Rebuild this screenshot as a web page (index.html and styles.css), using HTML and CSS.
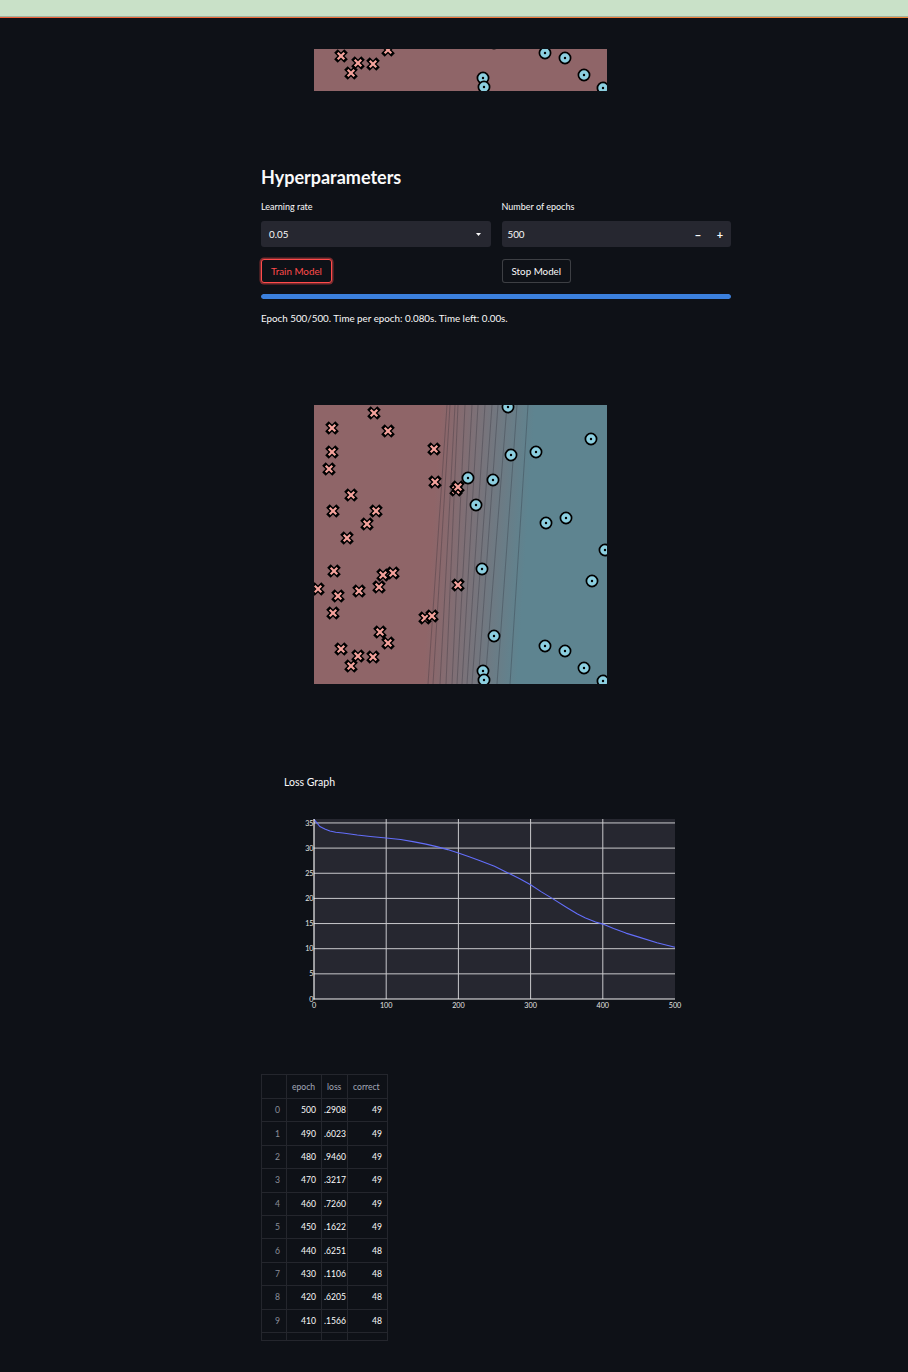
FILE: index.html
```html
<!DOCTYPE html>
<html>
<head>
<meta charset="utf-8">
<link rel="stylesheet" href="styles.css">
</head>
<body>
<div class="topbar"></div>
<div class="deco"></div>
<svg width="0" height="0" class="defs">
  <defs>
    <g id="cx">
      <path class="cx-o" d="M-3.3-3.3L3.3 3.3M3.3-3.3L-3.3 3.3"/>
      <path class="cx-i" d="M-3.3-3.3L3.3 3.3M3.3-3.3L-3.3 3.3"/>
    </g>
    <g id="co">
      <circle class="co-o" r="5.6"/>
      <circle class="co-d" r="1.2"/>
    </g>
    <linearGradient id="bgGrad" gradientUnits="userSpaceOnUse" x1="118" y1="135" x2="212" y2="141">
      <stop offset="0" stop-color="#8f6568"/>
      <stop offset="1" stop-color="#5e8490"/>
    </linearGradient>
    <g id="pts">
      <use href="#cx" x="60" y="8"/><use href="#cx" x="18" y="23"/><use href="#cx" x="74" y="26"/>
      <use href="#cx" x="18" y="47"/><use href="#cx" x="15" y="64"/><use href="#cx" x="120" y="44"/>
      <use href="#cx" x="121" y="77"/><use href="#cx" x="142" y="85"/><use href="#cx" x="144" y="82"/>
      <use href="#cx" x="37" y="90"/><use href="#cx" x="19" y="106"/><use href="#cx" x="62" y="106"/>
      <use href="#cx" x="53" y="119"/><use href="#cx" x="33" y="133"/><use href="#cx" x="20" y="166"/>
      <use href="#cx" x="79" y="168"/><use href="#cx" x="69" y="170"/><use href="#cx" x="65" y="182"/>
      <use href="#cx" x="4" y="184"/><use href="#cx" x="24" y="191"/><use href="#cx" x="45" y="186"/>
      <use href="#cx" x="19" y="208"/><use href="#cx" x="111" y="213"/><use href="#cx" x="118" y="211"/>
      <use href="#cx" x="144" y="180"/><use href="#cx" x="66" y="227"/><use href="#cx" x="74" y="238"/>
      <use href="#cx" x="27" y="244"/><use href="#cx" x="44" y="251"/><use href="#cx" x="59" y="252"/>
      <use href="#cx" x="37" y="261"/>
      <use href="#co" x="194" y="2"/><use href="#co" x="277" y="34"/><use href="#co" x="197" y="50"/>
      <use href="#co" x="222" y="47"/><use href="#co" x="154" y="73"/><use href="#co" x="179" y="75"/>
      <use href="#co" x="162" y="100"/><use href="#co" x="252" y="113"/><use href="#co" x="232" y="118"/>
      <use href="#co" x="291" y="145"/><use href="#co" x="168" y="164"/><use href="#co" x="278" y="176"/>
      <use href="#co" x="180" y="231"/><use href="#co" x="231" y="241"/><use href="#co" x="251" y="246"/>
      <use href="#co" x="270" y="263"/><use href="#co" x="169" y="266"/><use href="#co" x="170" y="275"/>
      <use href="#co" x="289" y="276"/>
    </g>
  </defs>
</svg>

<div class="main">
  <svg class="plot-frag" width="293" height="42" viewBox="0 237 293 42">
    <rect x="0" y="0" width="293" height="279" fill="#8f6568"/>
    <use href="#pts"/>
  </svg>

  <h3 class="heading">Hyperparameters</h3>

  <div class="inputs">
    <div class="field">
      <div class="label">Learning rate</div>
      <div class="select">
        <span>0.05</span>
        <svg class="caret" width="5" height="3" viewBox="0 0 5 3"><path d="M0 0H5L2.5 3Z" fill="#fafafa"/></svg>
      </div>
    </div>
    <div class="field">
      <div class="label">Number of epochs</div>
      <div class="number">
        <span class="num-val">500</span>
        <span class="step">&minus;</span>
        <span class="step">+</span>
      </div>
    </div>
  </div>

  <div class="buttons">
    <div class="btn-cell"><button class="btn btn-focus">Train Model</button></div>
    <div class="btn-cell"><button class="btn">Stop Model</button></div>
  </div>

  <div class="progress"><div class="progress-fill"></div></div>

  <p class="status">Epoch 500/500. Time per epoch: 0.080s. Time left: 0.00s.</p>

  <svg class="plot" width="293" height="279" viewBox="0 0 293 279">
    <rect x="0" y="0" width="293" height="279" fill="url(#bgGrad)"/>
    <g class="contours">
      <line x1="133" y1="0" x2="114" y2="279"/>
      <line x1="136" y1="0" x2="119" y2="279"/>
      <line x1="141" y1="0" x2="126" y2="279"/>
      <line x1="144" y1="0" x2="132" y2="279"/>
      <line x1="151" y1="0" x2="138" y2="279"/>
      <line x1="158" y1="0" x2="143" y2="279"/>
      <line x1="164" y1="0" x2="148" y2="279"/>
      <line x1="171" y1="0" x2="153" y2="279"/>
      <line x1="178" y1="0" x2="158" y2="279"/>
      <line x1="184" y1="0" x2="164" y2="279"/>
      <line x1="193" y1="0" x2="171" y2="279"/>
      <line x1="203" y1="0" x2="183" y2="279"/>
      <line x1="214" y1="0" x2="196" y2="279"/>
    </g>
    <use href="#pts"/>
  </svg>

  <div class="chart">
    <div class="chart-title">Loss Graph</div>
    <svg class="chart-svg" width="440" height="215" viewBox="0 0 440 215">
      <rect x="53" y="19" width="361" height="180" fill="#262730"/>
      <g class="grid">
        <line x1="53" y1="173.85" x2="414" y2="173.85"/>
        <line x1="53" y1="148.7" x2="414" y2="148.7"/>
        <line x1="53" y1="123.55" x2="414" y2="123.55"/>
        <line x1="53" y1="98.4" x2="414" y2="98.4"/>
        <line x1="53" y1="73.25" x2="414" y2="73.25"/>
        <line x1="53" y1="48.1" x2="414" y2="48.1"/>
        <line x1="53" y1="22.95" x2="414" y2="22.95"/>
        <line x1="125.2" y1="19" x2="125.2" y2="199"/>
        <line x1="197.4" y1="19" x2="197.4" y2="199"/>
        <line x1="269.6" y1="19" x2="269.6" y2="199"/>
        <line x1="341.8" y1="19" x2="341.8" y2="199"/>
      </g>
      <polyline class="curve" points="53,19.4 55.9,22.95 58.8,26.5 63.8,29 68.9,31 74.7,32.3 81.9,33 96.3,35 109.3,36.5 125.2,38 139.6,39.5 151.9,41.6 164.9,44.1 175.7,46.6 186.6,49.6 197.4,53.1 208.2,56.7 219.1,60.7 233.5,66.2 246.5,72.7 258.8,78.8 269.6,84.8 280.4,91.9 292,98.9 305.7,107.5 316.5,114 324.5,118 334.6,122 341.8,124.1 352.6,128.6 364.9,133.1 377.9,137.1 396,142.7 414,147.2"/>
      <g class="axes">
        <line x1="53" y1="19" x2="53" y2="199.5"/>
        <line x1="52.5" y1="199" x2="414" y2="199"/>
      </g>
      <g class="yt">
        <text x="52.5" y="201.5">0</text>
        <text x="52.5" y="176.4">5</text>
        <text x="52.5" y="151.2">10</text>
        <text x="52.5" y="126.1">15</text>
        <text x="52.5" y="100.9">20</text>
        <text x="52.5" y="75.8">25</text>
        <text x="52.5" y="50.6">30</text>
        <text x="52.5" y="25.5">35</text>
      </g>
      <g class="xt">
        <text x="53" y="208">0</text>
        <text x="125.2" y="208">100</text>
        <text x="197.4" y="208">200</text>
        <text x="269.6" y="208">300</text>
        <text x="341.8" y="208">400</text>
        <text x="414" y="208">500</text>
      </g>
    </svg>
  </div>

  <table class="df">
    <colgroup>
      <col class="w-ix"><col class="w-ep"><col class="w-loss"><col class="w-cor">
    </colgroup>
    <thead>
      <tr><th class="ix"></th><th>epoch</th><th>loss</th><th>correct</th></tr>
    </thead>
    <tbody>
      <tr><td class="ix">0</td><td>500</td><td>.2908</td><td>49</td></tr>
      <tr><td class="ix">1</td><td>490</td><td>.6023</td><td>49</td></tr>
      <tr><td class="ix">2</td><td>480</td><td>.9460</td><td>49</td></tr>
      <tr><td class="ix">3</td><td>470</td><td>.3217</td><td>49</td></tr>
      <tr><td class="ix">4</td><td>460</td><td>.7260</td><td>49</td></tr>
      <tr><td class="ix">5</td><td>450</td><td>.1622</td><td>49</td></tr>
      <tr><td class="ix">6</td><td>440</td><td>.6251</td><td>48</td></tr>
      <tr><td class="ix">7</td><td>430</td><td>.1106</td><td>48</td></tr>
      <tr><td class="ix">8</td><td>420</td><td>.6205</td><td>48</td></tr>
      <tr><td class="ix">9</td><td>410</td><td>.1566</td><td>48</td></tr>
      <tr class="blank"><td class="ix"></td><td></td><td></td><td></td></tr>
    </tbody>
  </table>
</div>
</body>
</html>
```

FILE: styles.css
```css
html, body {
  margin: 0;
  padding: 0;
  background: #0e1117;
  color: #fafafa;
  font-family: Lato, "Liberation Sans", sans-serif;
}

.topbar {
  height: 16px;
  background: #c9e1c8;
  border-bottom: 1px solid #9fb1a0;
}

.deco {
  height: 1px;
  background: linear-gradient(90deg, #f0623a, #f28a3a);
}

.defs {
  position: absolute;
  width: 0;
  height: 0;
  overflow: hidden;
}

.cx-o {
  stroke: #000;
  stroke-width: 5;
  stroke-linecap: square;
  fill: none;
}

.cx-i {
  stroke: #f6a39d;
  stroke-width: 2.2;
  stroke-linecap: butt;
  fill: none;
}

.co-o {
  fill: #8ccfe0;
  stroke: #000;
  stroke-width: 1.7;
}

.co-d {
  fill: #000;
}

.main {
  width: 470px;
  margin-left: 261px;
}

.plot-frag {
  display: block;
  margin: 31px 0 0 53px;
}

.heading {
  margin: 75px 0 0 0;
  height: 22px;
  line-height: 22px;
  font-size: 18px;
  font-weight: 700;
}

.inputs {
  display: flex;
  gap: 11px;
  margin-top: 13px;
}

.field {
  flex: 1;
}

.label {
  height: 12px;
  line-height: 12px;
  font-size: 9px;
}

.select, .number {
  margin-top: 8px;
  height: 26px;
  background: #262730;
  border-radius: 3px;
  display: flex;
  align-items: center;
  font-size: 9.8px;
}

.select {
  padding: 0 10px 0 8px;
  justify-content: space-between;
}

.caret {
  display: block;
}

.number {
  padding-left: 6px;
}

.num-val {
  flex: 1;
}

.step {
  width: 22px;
  text-align: center;
  font-weight: 700;
  font-size: 11px;
}

.buttons {
  display: flex;
  gap: 11px;
  margin-top: 12px;
}

.btn-cell {
  flex: 1;
}

.btn {
  height: 24px;
  padding: 0 9px;
  background: #0e1117;
  color: #fafafa;
  border: 1px solid rgba(250, 250, 250, 0.2);
  border-radius: 3px;
  font-family: inherit;
  font-size: 9.8px;
}

.btn-focus {
  color: #ff4b4b;
  border-color: #ff4b4b;
  box-shadow: 0 0 0 1.5px rgba(255, 75, 75, 0.45);
}

.progress {
  margin-top: 11px;
  height: 5px;
  border-radius: 3px;
  background: #262730;
  overflow: hidden;
}

.progress-fill {
  height: 100%;
  width: 100%;
  background: #3b80de;
  border-radius: 3px;
}

.status {
  margin: 12px 0 0 0;
  height: 14px;
  line-height: 14px;
  font-size: 9.8px;
}

.plot {
  display: block;
  margin: 80px 0 0 53px;
}

.contours line {
  stroke: rgba(30, 30, 40, 0.45);
  stroke-width: 0.6;
}

.chart {
  margin-top: 91px;
}

.chart-title {
  padding-left: 23px;
  height: 14px;
  line-height: 14px;
  font-size: 10.5px;
}

.chart-svg {
  display: block;
  margin-top: 11px;
}

.grid line {
  stroke: #c9c9cc;
  stroke-width: 1;
}

.axes line {
  stroke: #f2f2f2;
  stroke-width: 1.2;
}

.curve {
  fill: none;
  stroke: #636efa;
  stroke-width: 1.1;
  stroke-linejoin: round;
}

.yt text, .xt text {
  font-family: Lato, "Liberation Sans", sans-serif;
  font-size: 7.2px;
  fill: #e4e4e4;
}

.yt text {
  text-anchor: end;
}

.xt text {
  text-anchor: middle;
}

.df {
  margin-top: 59px;
  border-collapse: collapse;
  table-layout: fixed;
  width: 126px;
  border: 1px solid #2b2d35;
  font-size: 8.6px;
}

.w-ix { width: 25px; }
.w-ep { width: 35px; }
.w-loss { width: 26px; }
.w-cor { width: 40px; }

.df th, .df td {
  border: 1px solid #24262d;
  padding: 0 5px;
  height: 23.4px;
  box-sizing: border-box;
  white-space: nowrap;
  overflow: hidden;
}

.df th {
  color: #a3a8b8;
  font-weight: 400;
  text-align: left;
  height: 24px;
}

.df td {
  text-align: right;
  color: #fafafa;
}

.df td:nth-child(3) {
  padding: 0 5px 0 2px;
}

.df .ix {
  color: #8b8f9a;
  text-align: right;
  padding-right: 6px;
}

.df .blank td {
  height: 8px;
}
```
